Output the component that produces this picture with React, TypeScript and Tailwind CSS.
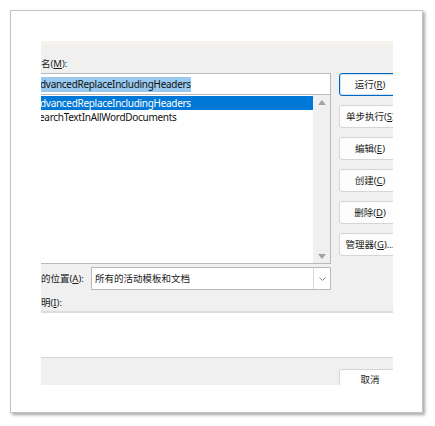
import React from "react";

const F = { fontFamily: '"Noto Sans", "Noto Sans CJK SC", sans-serif' };
const LAT = "text-[10px] tracking-[-0.3px]";

function Btn({ label, primary }: { label: React.ReactNode; primary?: boolean }) {
  return (
    <div
      className={
        "h-[23px] w-[62px] shrink-0 rounded-[3px] bg-[#fdfdfd] flex items-center justify-center pt-[1px] text-[9.5px] text-[#1a1a1a] whitespace-nowrap " +
        (primary ? "border border-[#0067c0] shadow-[inset_0_0_0_1px_#cfe3f7]" : "border border-[#d5d5d5]")
      }
    >
      {label}
    </div>
  );
}

export default function App() {
  return (
    <div className="w-[435px] h-[426px] bg-white pt-[10px] pl-[10px]" style={F}>
      <div className="w-[413px] h-[403px] bg-white border border-[#c4c4c4] shadow-[2px_2px_3px_rgba(0,0,0,0.35)] pt-[30px] pl-[30px]">
        <div className="w-[352px] h-[344px] overflow-hidden bg-[#f0f0f0] flex flex-col">
          <div className="h-[6px] shrink-0 bg-gradient-to-b from-[#f8f3ec] to-[#f2f0ed]" />
          <div className="flex shrink-0 h-[264px]">
            {/* left column */}
            <div className="w-[290px] shrink-0 flex flex-col">
              <div className="h-[26px] shrink-0 pt-[10px] text-[9.5px] leading-[14px] text-[#1a1a1a]">
                名(<span className="underline">M</span>):
              </div>
              <div className="h-[22px] shrink-0 bg-white border border-[#b9b9b9] border-l-0 flex items-center pt-[1px]">
                <span className={"bg-[#99c9ef] leading-[15px] text-[#111] -ml-[1px] " + LAT}>dvancedReplaceIncludingHeaders</span>
              </div>
              <div className="h-[169px] shrink-0 bg-white border border-[#b9b9b9] border-l-0 border-t-0 flex">
                <div className={"flex-1 pt-[1px] leading-[13px] " + LAT}>
                  <div className="h-[14px] bg-[#0078d7] text-white -ml-[1px] pt-[1px]">dvancedReplaceIncludingHeaders</div>
                  <div className="h-[14px] mt-[1px] text-[#111] -ml-[2px]">earchTextInAllWordDocuments</div>
                </div>
                <div className="w-[17px] bg-[#f0f0f0] flex flex-col items-center justify-between pt-[5px] pb-[4px]">
                  <svg width="8" height="5" viewBox="0 0 8 5"><path d="M0 5 L4 0 L8 5 Z" fill="#a3a3a3" /></svg>
                  <svg width="8" height="5" viewBox="0 0 8 5"><path d="M0 0 L4 5 L8 0 Z" fill="#a3a3a3" /></svg>
                </div>
              </div>
              <div className="h-[23px] shrink-0 mt-[3px] flex items-center">
                <div className="w-[50px] pt-[1px] text-[9.5px] text-[#1a1a1a] whitespace-nowrap">
                  的位置(<span className="underline">A</span>):
                </div>
                <div className="flex-1 h-[23px] bg-white border border-[#b9b9b9] flex items-center">
                  <span className="flex-1 pl-[3px] pt-[1px] text-[9.5px] text-[#1a1a1a]">所有的活动模板和文档</span>
                  <div className="w-[17px] h-full border-l border-[#dadada] flex items-center justify-center">
                    <svg width="7" height="4" viewBox="0 0 7 4"><path d="M0.5 0.5 L3.5 3.5 L6.5 0.5" stroke="#888" strokeWidth="1" fill="none" /></svg>
                  </div>
                </div>
              </div>
              <div className="h-[21px] shrink-0 pt-[6px] text-[9.5px] leading-[14px] text-[#1a1a1a]">
                明(<span className="underline">I</span>):
              </div>
            </div>
            {/* right column */}
            <div className="ml-[8px] pt-[26px] flex flex-col gap-[9px]">
              <Btn primary label={<>运行(<span className="underline">R</span>)</>} />
              <div className="h-[23px] w-[62px] shrink-0 rounded-[3px] bg-[#fdfdfd] border border-[#d5d5d5] flex items-center pl-[6px] pt-[1px] text-[9.5px] text-[#1a1a1a] whitespace-nowrap overflow-hidden">
                单步执行(<span className="underline">S</span>)
              </div>
              <Btn label={<>编辑(<span className="underline">E</span>)</>} />
              <Btn label={<>创建(<span className="underline">C</span>)</>} />
              <Btn label={<>删除(<span className="underline">D</span>)</>} />
              <Btn label={<>管理器(<span className="underline">G</span>)...</>} />
            </div>
          </div>
          <div className="h-[2px] shrink-0 bg-[#dcdcdc]" />
          <div className="h-[44px] shrink-0 bg-white" />
          <div className="h-[1px] shrink-0 bg-[#d6d6d6]" />
          <div className="h-[28px] shrink-0 overflow-hidden bg-[#f0f0f0] pl-[298px] pt-[11px]">
            <div className="h-[30px] w-[62px] rounded-[3px] bg-white border border-[#d5d5d5] flex justify-center pt-[3px] text-[9.5px] text-[#1a1a1a]">
              取消
            </div>
          </div>
        </div>
      </div>
    </div>
  );
}
